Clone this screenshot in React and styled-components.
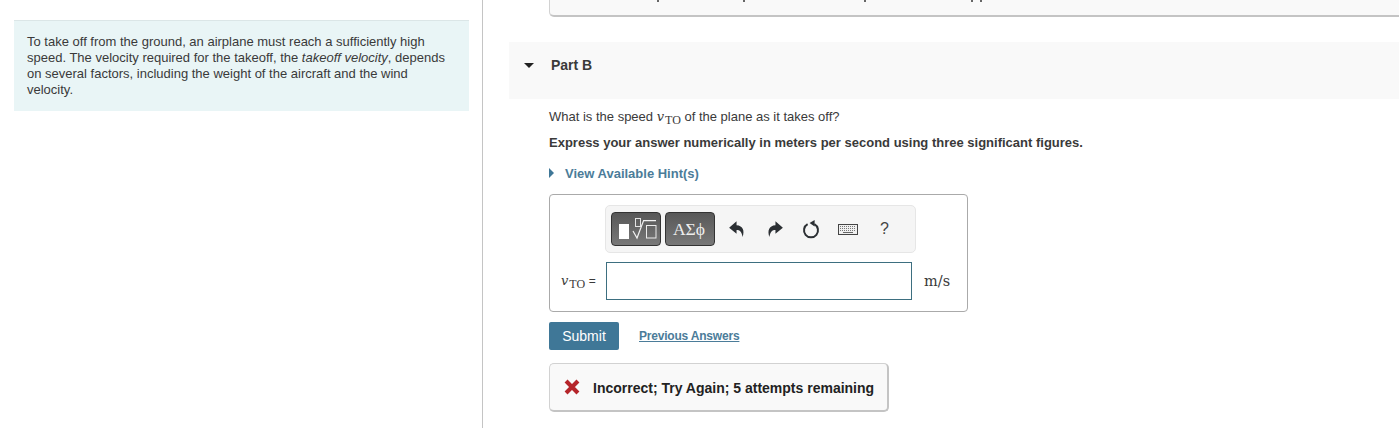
import styled, { createGlobalStyle } from 'styled-components';

const GlobalStyle = createGlobalStyle`
  html, body {
    margin: 0;
    padding: 0;
    background: #fff;
  }
  body {
    font-family: "Liberation Sans", Arial, sans-serif;
    font-size: 13px;
    color: #3a3a3a;
    overflow: hidden;
  }
`;

function UndoIcon({ flip }) {
  return (
    <ArrowSvg viewBox="0 0 16 16" $flip={flip}>
      <path d="M7.6 1 1 6.8l6.6 5.4V8.8c2.9 0 4.6 1.5 5.4 6.2 1.9-5.6.4-10-5.4-10.4z" fill="#2b2f33" />
    </ArrowSvg>
  );
}

function ResetIcon() {
  return (
    <ResetSvg viewBox="0 0 20 20">
      <path d="M6.6 5.2a7 7 0 1 0 6.8 0" fill="none" stroke="#2b2f33" strokeWidth="2" />
      <path d="M13.6 1v6.4L8.6 4z" fill="#2b2f33" />
    </ResetSvg>
  );
}

function KeyboardIcon() {
  return (
    <KeyboardSvg viewBox="0 0 20 11">
      <rect x="0.5" y="0.5" width="19" height="10" fill="#f0f0f0" stroke="#444" />
      <path d="M2 2.5h16M2 4.5h16M2 6.5h16" stroke="#777" strokeWidth="1" strokeDasharray="1 1" />
      <path d="M5 8.5h10" stroke="#666" strokeWidth="1" />
    </KeyboardSvg>
  );
}

function RootIcon() {
  return (
    <RootSvg viewBox="0 0 50 34">
      <rect x="8" y="12" width="10" height="15" fill="#fff" />
      <rect x="24.5" y="6.5" width="5" height="8" fill="none" stroke="#e4e4e4" />
      <path d="M22 19 26 26 32.6 8.6H45" fill="none" stroke="#f2f2f2" strokeWidth="1.2" />
      <rect x="35.5" y="13.5" width="9.5" height="12.5" fill="none" stroke="#ececec" />
    </RootSvg>
  );
}

function VTo() {
  return (
    <MathVar>
      <i>v</i>
      <sub>TO</sub>
    </MathVar>
  );
}

export default function App() {
  return (
    <>
      <GlobalStyle />
      <Page>
        <LeftColumn>
          <IntroBox>
            To take off from the ground, an airplane must reach a sufficiently high
            speed. The velocity required for the takeoff, the <em>takeoff velocity</em>, depends
            on several factors, including the weight of the aircraft and the wind
            velocity.
          </IntroBox>
        </LeftColumn>
        <RightColumn>
          <PreviousFeedback>
            <Descender $left={107} />
            <Descender $left={84} />
            <Descender $left={119} />
            <Descender $left={105} />
            <Descender $left={7} />
          </PreviousFeedback>
          <PartHeader>
            <Caret />
            <PartTitle>Part B</PartTitle>
          </PartHeader>
          <PartBody>
            <Question>
              What is the speed <VTo /> of the plane as it takes off?
            </Question>
            <Instruction>
              Express your answer numerically in meters per second using three significant figures.
            </Instruction>
            <HintToggle>
              <HintArrow />
              View Available Hint(s)
            </HintToggle>
            <AnswerBox>
              <Toolbar>
                <ToolButton><RootIcon /></ToolButton>
                <ToolButton><GreekText>ΑΣϕ</GreekText></ToolButton>
                <ToolIcon $left={9}><UndoIcon /></ToolIcon>
                <ToolIcon $left={16}><UndoIcon flip /></ToolIcon>
                <ToolIcon $left={13}><ResetIcon /></ToolIcon>
                <ToolIcon $left={13}><KeyboardIcon /></ToolIcon>
                <HelpMark>?</HelpMark>
              </Toolbar>
              <InputRow>
                <InputLabel><VTo /> <Equals>=</Equals></InputLabel>
                <AnswerInput />
                <Units>m/s</Units>
              </InputRow>
            </AnswerBox>
            <ActionRow>
              <SubmitButton>Submit</SubmitButton>
              <PreviousLink href="#">Previous Answers</PreviousLink>
            </ActionRow>
            <Feedback>
              <WrongMark viewBox="0 0 14 14">
                <path d="M1.8 1.8 12.2 12.2M12.2 1.8 1.8 12.2" stroke="#b5252a" strokeWidth="3.6" />
              </WrongMark>
              <FeedbackText>Incorrect; Try Again; 5 attempts remaining</FeedbackText>
            </Feedback>
          </PartBody>
        </RightColumn>
      </Page>
    </>
  );
}

const Page = styled.div`
  display: flex;
  width: 1399px;
  height: 428px;
  overflow: hidden;
`;

const LeftColumn = styled.div`
  box-sizing: border-box;
  width: 483px;
  height: 428px;
  padding: 20px 13px 0 14px;
  border-right: 1px solid #c4c4c4;
`;

const IntroBox = styled.div`
  box-sizing: border-box;
  height: 91px;
  padding: 13px 22px 0 13px;
  background: #e9f5f6;
  border-top: 1px solid #dbe6e7;
  font-size: 13px;
  line-height: 16px;
  color: #3a3a3a;
`;

const RightColumn = styled.div`
  flex: 1;
  min-width: 0;
  padding-left: 26px;
`;

const PreviousFeedback = styled.div`
  box-sizing: border-box;
  display: flex;
  align-items: flex-start;
  height: 18px;
  margin: -1px 0 25px 40px;
  background: #f9f9f9;
  border-left: 1px solid #d2d2d2;
  border-bottom: 2px solid #c4c4c4;
  border-radius: 0 0 0 5px;
`;

const Descender = styled.span`
  width: 2px;
  height: 3px;
  margin-left: ${(p) => p.$left}px;
  background: #666;
`;

const PartHeader = styled.div`
  display: flex;
  align-items: flex-start;
  height: 57px;
  background: #f9f9f9;
`;

const Caret = styled.span`
  width: 0;
  height: 0;
  margin: 21px 0 0 15px;
  border-left: 5px solid transparent;
  border-right: 5px solid transparent;
  border-top: 5px solid #222;
`;

const PartTitle = styled.h3`
  margin: 15px 0 0 17px;
  font-size: 14px;
  line-height: 16px;
  font-weight: bold;
  color: #3a3a3a;
`;

const PartBody = styled.div`
  padding: 9px 0 0 40px;
`;

const Question = styled.p`
  margin: 0;
  height: 18px;
  font-size: 13px;
  line-height: 18px;
  color: #3a3a3a;
`;

const MathVar = styled.span`
  font-family: "Liberation Serif", serif;
  color: #3a3a3a;

  i {
    font-family: "DejaVu Serif", serif;
    font-size: 13px;
  }

  sub {
    margin-left: 1px;
    font-size: 12px;
    line-height: 0;
    vertical-align: -3px;
  }
`;

const Instruction = styled.p`
  margin: 8px 0 0;
  font-size: 13px;
  line-height: 18px;
  font-weight: bold;
  color: #3a3a3a;
`;

const HintToggle = styled.div`
  display: flex;
  align-items: center;
  margin-top: 12px;
  height: 18px;
  font-size: 13px;
  font-weight: bold;
  color: #4b7c99;
`;

const HintArrow = styled.span`
  width: 0;
  height: 0;
  margin-right: 11px;
  border-top: 5px solid transparent;
  border-bottom: 5px solid transparent;
  border-left: 5px solid #3f7797;
`;

const AnswerBox = styled.div`
  box-sizing: border-box;
  width: 419px;
  height: 118px;
  margin-top: 12px;
  padding: 10px 0 0 12px;
  border: 1px solid #aaa;
  border-radius: 4px;
`;

const Toolbar = styled.div`
  box-sizing: border-box;
  display: flex;
  align-items: center;
  width: 311px;
  height: 48px;
  margin-left: 43px;
  padding-left: 5px;
  gap: 4px;
  background: #f5f5f5;
  border: 1px solid #e6e6e6;
  border-radius: 5px;
`;

const ToolButton = styled.div`
  box-sizing: border-box;
  display: flex;
  align-items: center;
  justify-content: center;
  width: 50px;
  height: 34px;
  background: linear-gradient(#585858, #787878);
  border: 1px solid #333;
  border-radius: 4px;
`;

const RootSvg = styled.svg`
  width: 50px;
  height: 34px;
  flex-shrink: 0;
`;

const GreekText = styled.span`
  padding-right: 2px;
  font-family: "Liberation Serif", serif;
  font-size: 17.5px;
  color: #eee;
`;

const ToolIcon = styled.span`
  display: flex;
  margin-left: ${(p) => p.$left}px;
`;

const ArrowSvg = styled.svg`
  width: 18px;
  height: 18px;
  transform: ${(p) => (p.$flip ? 'scaleX(-1)' : 'none')};
`;

const ResetSvg = styled.svg`
  width: 20px;
  height: 20px;
`;

const KeyboardSvg = styled.svg`
  width: 20px;
  height: 11px;
`;

const HelpMark = styled.span`
  margin-left: 18px;
  font-size: 16px;
  color: #444;
`;

const InputRow = styled.div`
  display: flex;
  align-items: center;
  margin-top: 9px;
  margin-left: -1px;
`;

const InputLabel = styled.div`
  width: 45px;
  white-space: nowrap;
`;

const Equals = styled.span`
  font-family: "Liberation Sans", sans-serif;
  font-size: 12px;
`;

const AnswerInput = styled.div`
  box-sizing: border-box;
  width: 306px;
  height: 38px;
  background: #fff;
  border: 1px solid #3d6f80;
`;

const Units = styled.div`
  margin-left: 12px;
  font-family: "DejaVu Serif", serif;
  font-size: 14.5px;
  color: #3a3a3a;
`;

const ActionRow = styled.div`
  display: flex;
  align-items: center;
  margin-top: 10px;
`;

const SubmitButton = styled.div`
  display: flex;
  align-items: center;
  justify-content: center;
  width: 70px;
  height: 28px;
  background: #3f7797;
  border-radius: 2px;
  color: #fff;
  font-size: 14px;
`;

const PreviousLink = styled.a`
  margin: 0 0 1px 20px;
  font-size: 12px;
  letter-spacing: -0.2px;
  font-weight: bold;
  color: #4b7c99;
  text-decoration: underline;
`;

const Feedback = styled.div`
  box-sizing: border-box;
  display: flex;
  align-items: center;
  width: 340px;
  height: 49px;
  margin-top: 13px;
  padding-left: 14px;
  background: #f9f9f9;
  border: 1px solid #d2d2d2;
  border-bottom: 2px solid #c4c4c4;
  border-right: 2px solid #c4c4c4;
  border-radius: 5px;
`;

const WrongMark = styled.svg`
  width: 16px;
  height: 16px;
  margin-right: 13px;
`;

const FeedbackText = styled.span`
  padding-top: 2px;
  font-size: 14px;
  font-weight: bold;
  color: #222;
`;
